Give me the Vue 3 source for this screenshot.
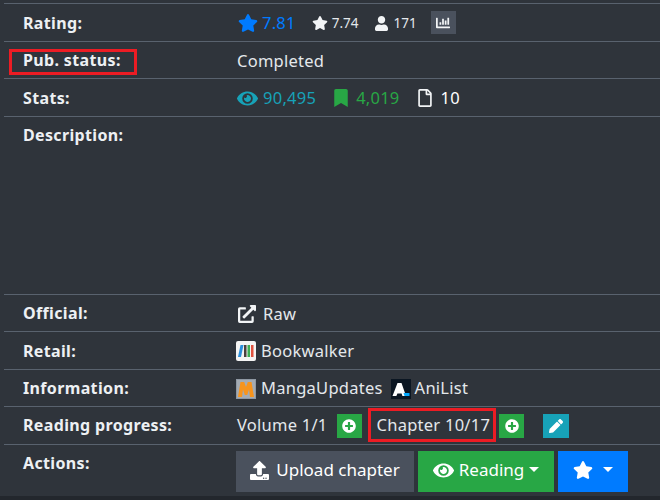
<script setup>
const star = 'M259.3 17.8L194 150.2 47.9 171.5c-26.2 3.8-36.7 36.1-17.7 54.6l105.7 103-25 145.5c-4.5 26.3 23.2 46 46.4 33.7L288 439.6l130.7 68.7c23.2 12.2 50.9-7.4 46.4-33.7l-25-145.5 105.7-103c19-18.5 8.5-50.8-17.7-54.6L382 150.2 316.7 17.8c-11.7-23.6-45.6-23.9-57.4 0z'
const eye = 'M572.52 241.4C518.29 135.59 410.93 64 288 64S57.68 135.64 3.48 241.41a32.35 32.35 0 0 0 0 29.19C57.71 376.41 165.07 448 288 448s230.32-71.64 284.52-177.41a32.35 32.35 0 0 0 0-29.19zM288 400a144 144 0 1 1 144-144 143.93 143.93 0 0 1-144 144zm0-240a95.31 95.31 0 0 0-25.31 3.79 47.85 47.85 0 0 1-66.9 66.9A95.78 95.78 0 1 0 288 160z'
const plus = 'M256 8C119 8 8 119 8 256s111 248 248 248 248-111 248-248S393 8 256 8zm144 276c0 6.6-5.4 12-12 12h-92v92c0 6.6-5.4 12-12 12h-56c-6.6 0-12-5.4-12-12v-92h-92c-6.6 0-12-5.4-12-12v-56c0-6.6 5.4-12 12-12h92v-92c0-6.6 5.4-12 12-12h56c6.6 0 12 5.4 12 12v92h92c6.6 0 12 5.4 12 12v56z'
</script>

<template>
  <div class="page">
    <div class="row">
      <div class="label">Rating:</div>
      <div class="value">
        <svg class="ic-star-lg blue" viewBox="0 0 576 512"><path :d="star" /></svg>
        <span class="blue rate">7.81</span>
        <svg class="ic-star-sm" viewBox="0 0 576 512"><path :d="star" /></svg>
        <span class="small s74">7.74</span>
        <svg class="ic-user" viewBox="0 0 448 512"><path d="M224 256c70.7 0 128-57.3 128-128S294.7 0 224 0 96 57.3 96 128s57.3 128 128 128zm89.6 32h-16.7c-22.2 10.2-46.9 16-72.9 16s-50.6-5.8-72.9-16h-16.7C60.2 288 0 348.2 0 422.4V464c0 26.5 21.5 48 48 48h352c26.5 0 48-21.5 48-48v-41.6c0-74.2-60.2-134.4-134.4-134.4z" /></svg>
        <span class="small">171</span>
        <span class="chart-btn">
          <svg viewBox="0 0 512 512"><path d="M332.8 320h38.4c6.4 0 12.8-6.4 12.8-12.8V172.8c0-6.4-6.4-12.8-12.8-12.8h-38.4c-6.4 0-12.8 6.4-12.8 12.8v134.4c0 6.4 6.4 12.8 12.8 12.8zm96 0h38.4c6.4 0 12.8-6.4 12.8-12.8V76.8c0-6.4-6.4-12.8-12.8-12.8h-38.4c-6.4 0-12.8 6.4-12.8 12.8v230.4c0 6.4 6.4 12.8 12.8 12.8zm-288 0h38.4c6.4 0 12.8-6.4 12.8-12.8v-70.4c0-6.4-6.4-12.8-12.8-12.8h-38.4c-6.4 0-12.8 6.4-12.8 12.8v70.4c0 6.4 6.4 12.8 12.8 12.8zm96 0h38.4c6.4 0 12.8-6.4 12.8-12.8V108.8c0-6.4-6.4-12.8-12.8-12.8h-38.4c-6.4 0-12.8 6.4-12.8 12.8v198.4c0 6.4 6.4 12.8 12.8 12.8zM496 384H64V80c0-8.84-7.16-16-16-16H16C7.16 64 0 71.16 0 80v336c0 17.67 14.33 32 32 32h464c8.84 0 16-7.16 16-16v-32c0-8.84-7.16-16-16-16z" /></svg>
        </span>
      </div>
    </div>

    <div class="row">
      <div class="label">Pub. status:</div>
      <div class="value">Completed</div>
      <div class="mark mark-status"></div>
    </div>

    <div class="row">
      <div class="label">Stats:</div>
      <div class="value">
        <svg class="ic-eye teal" viewBox="0 0 576 512"><path :d="eye" /></svg>
        <span class="teal views">90,495</span>
        <svg class="ic-bookmark green" viewBox="0 0 384 512"><path d="M0 512V48C0 21.49 21.49 0 48 0h288c26.51 0 48 21.49 48 48v464L192 400 0 512z" /></svg>
        <span class="green follows">4,019</span>
        <svg class="ic-file" viewBox="0 0 384 512"><path d="M369.9 97.9L286 14C277 5 264.8-.1 252.1-.1H48C21.5 0 0 21.5 0 48v416c0 26.5 21.5 48 48 48h288c26.5 0 48-21.5 48-48V131.9c0-12.7-5.1-25-14.1-34zM332.1 128H256V51.9l76.1 76.1zM48 464V48h160v104c0 13.3 10.7 24 24 24h104v288H48z" /></svg>
        <span class="white">10</span>
      </div>
    </div>

    <div class="row row-desc">
      <div class="label">Description:</div>
    </div>

    <div class="row">
      <div class="label">Official:</div>
      <div class="value">
        <svg class="ic-ext" viewBox="0 0 512 512"><path d="M432,320H400a16,16,0,0,0-16,16V448H64V128H208a16,16,0,0,0,16-16V80a16,16,0,0,0-16-16H48A48,48,0,0,0,0,112V464a48,48,0,0,0,48,48H400a48,48,0,0,0,48-48V336A16,16,0,0,0,432,320ZM488,0h-128c-21.37,0-32.05,25.91-17,41l35.73,35.73L135,320.37a24,24,0,0,0,0,34L157.67,377a24,24,0,0,0,34,0L435.28,133.32,471,169c15,15,41,4.5,41-17V24A24,24,0,0,0,488,0Z" /></svg>
        <span>Raw</span>
      </div>
    </div>

    <div class="row">
      <div class="label">Retail:</div>
      <div class="value">
        <svg class="logo" viewBox="0 0 20 20">
          <rect width="20" height="20" rx="2" fill="#f4f4f4" />
          <path d="M2 16 L4.5 4 H7.5 L5 16 Z" fill="#2a8fdc" />
          <rect x="8" y="4" width="2.5" height="12" fill="#4a3f3f" />
          <rect x="11.5" y="4" width="2.5" height="12" fill="#3cae54" />
          <rect x="15" y="4" width="2.5" height="12" fill="#e0523f" />
        </svg>
        <span>Bookwalker</span>
      </div>
    </div>

    <div class="row">
      <div class="label">Information:</div>
      <div class="value">
        <svg class="logo" viewBox="0 0 20 20">
          <rect width="20" height="20" fill="#8f98a3" />
          <rect x="1" y="1" width="18" height="18" fill="#a4abb3" />
          <path d="M2 18 L4.5 3 H8.2 L10 8 L11.8 3 H15.5 L18 18 H14 L13 10.5 L11.2 16 H8.8 L7 10.5 L6 18 Z" fill="#f7941d" />
        </svg>
        <span class="up">MangaUpdates</span>
        <svg class="logo logo-ani" viewBox="0 0 20 20">
          <rect width="20" height="20" fill="#0b1622" />
          <path d="M1.5 17 L6.5 4 H10.5 L15 17 H11.4 L10.6 14.4 H6.4 L5.4 17 Z" fill="#fff" />
          <path d="M12.5 14 H18.5 V17 H13.5 Z" fill="#02a9ff" />
        </svg>
        <span class="up">AniList</span>
      </div>
    </div>

    <div class="row">
      <div class="label label-progress">Reading progress:</div>
      <div class="value">
        <span class="volume up">Volume 1/1</span>
        <span class="mini green-bg"><svg viewBox="0 0 512 512"><path :d="plus" /></svg></span>
        <span class="chapter up">Chapter 10/17</span>
        <span class="mini green-bg"><svg viewBox="0 0 512 512"><path :d="plus" /></svg></span>
        <span class="mini teal-bg edit"><svg viewBox="0 0 512 512"><path d="M497.9 142.1l-46.1 46.1c-4.7 4.7-12.3 4.7-17 0l-111-111c-4.7-4.7-4.7-12.3 0-17l46.1-46.1c18.7-18.7 49.1-18.7 67.9 0l60.1 60.1c18.8 18.7 18.8 49.1 0 67.9zM284.2 99.8L21.6 362.4.4 483.9c-2.9 16.4 11.4 30.6 27.8 27.8l121.5-21.3 262.6-262.6c4.7-4.7 4.7-12.3 0-17l-111-111c-4.8-4.7-12.4-4.7-17.1 0z" /></svg></span>
      </div>
      <div class="mark mark-chapter"></div>
    </div>

    <div class="row row-actions">
      <div class="label label-actions">Actions:</div>
      <div class="buttons">
        <span class="btn btn-upload">
          <svg class="ic-upload" viewBox="0 0 512 512"><path d="M296 384h-80c-13.3 0-24-10.7-24-24V192h-87.7c-17.8 0-26.7-21.5-14.1-34.1L242.3 5.7c7.5-7.5 19.8-7.5 27.3 0l152.2 152.2c12.6 12.6 3.7 34.1-14.1 34.1H320v168c0 13.3-10.7 24-24 24zm216-8v112c0 13.3-10.7 24-24 24H24c-13.3 0-24-10.7-24-24V376c0-13.3 10.7-24 24-24h136v8c0 30.9 25.1 56 56 56h80c30.9 0 56-25.1 56-56v-8h136c13.3 0 24 10.7 24 24zm-124 88c0-11-9-20-20-20s-20 9-20 20 9 20 20 20 20-9 20-20zm64 0c0-11-9-20-20-20s-20 9-20 20 9 20 20 20 20-9 20-20z" /></svg>
          Upload chapter
        </span>
        <span class="btn btn-reading">
          <svg class="ic-eye-btn" viewBox="0 0 576 512"><path :d="eye" /></svg>
          Reading
          <i class="caret"></i>
        </span>
        <span class="btn btn-star">
          <svg class="ic-star-btn" viewBox="0 0 576 512"><path :d="star" /></svg>
          <i class="caret"></i>
        </span>
      </div>
    </div>
    <div class="footer"></div>
  </div>
</template>

<style>
html, body { margin: 0; background: #2f343b; }
</style>

<style scoped>
.page {
  width: 660px;
  height: 500px;
  overflow: hidden;
  box-sizing: border-box;
  padding: 3px 0 0 4px;
  background: #2f343b;
  color: #e4e8ec;
  font-family: "Noto Sans", sans-serif;
  font-size: 16.5px;
  letter-spacing: 0.25px;
  line-height: 24px;
}
.row {
  position: relative;
  display: flex;
  box-sizing: border-box;
  height: 37.5px;
  align-items: flex-start;
  padding-top: 7px;
  border-top: 1px solid #59626e;
}
.row-desc { height: 178px; }
.row-actions { height: 52px; padding-top: 6px; }
.label {
  width: 233px;
  flex: none;
  box-sizing: border-box;
  padding-left: 19px;
  font-size: 16px;
  letter-spacing: 0.35px;
  font-weight: 700;
  color: #edf0f3;
  margin-top: -0.5px;
}
.label-progress { margin-top: -1px; }
.label-actions { margin-top: 0; }
.value {
  display: flex;
  align-items: center;
  height: 24px;
  white-space: nowrap;
}
.up { margin-top: -2px; }
svg { fill: currentColor; display: block; flex: none; }
.blue { color: #007bff; }
.teal { color: #17a2b8; }
.green { color: #28a745; }
.white { color: #fff; }
.ic-star-lg { width: 20px; height: 18px; margin-left: 1px; }
.rate { margin-left: 4px; }
.ic-star-sm { width: 16px; height: 14px; margin-left: 16px; color: #f2f4f6; }
.small { font-size: 13.5px; letter-spacing: 0; margin-left: 4px; }
.ic-user { width: 13px; height: 15px; margin-left: 16px; color: #f2f4f6; }
.ic-user + .small { margin-left: 6px; }
.chart-btn {
  display: flex;
  align-items: center;
  justify-content: center;
  width: 25px;
  height: 23px;
  margin-left: 14px;
  margin-top: -1px;
  background: #4a515d;
}
.chart-btn svg { width: 14px; height: 14px; color: #f2f4f6; }
.ic-eye { width: 21px; height: 19px; }
.views { margin-left: 5px; }
.ic-bookmark { width: 14px; height: 18px; margin-left: 18px; }
.follows { margin-left: 8px; }
.ic-file { width: 14px; height: 18px; margin-left: 18px; color: #f2f4f6; }
.value .white { margin-left: 9px; }
.ic-ext { width: 18px; height: 18px; margin: 0 7px 0 1px; color: #f2f4f6; }
.logo { width: 20px; height: 20px; margin-right: 5px; margin-left: -1px; }
.logo-ani { margin-left: 8px; margin-right: 4px; }
.mini {
  display: flex;
  align-items: center;
  justify-content: center;
  width: 25px;
  height: 24px;
  margin-left: 9px;
  color: #fff;
}
.mini svg { width: 14px; height: 14px; }
.green-bg { background: #28a745; }
.teal-bg { background: #17a2b8; }
.edit { width: 26px; margin-left: 19px; }
.chapter { margin-left: 15px; }
.mark {
  position: absolute;
  box-sizing: border-box;
  border: 3px solid #ec1c24;
}
.mark-status { left: 5px; top: 7px; width: 128px; height: 26px; }
.mark-chapter { left: 364px; top: 1px; width: 128px; height: 34px; }
.buttons { display: flex; gap: 4px; height: 41px; margin-left: -1px; }
.btn {
  display: flex;
  align-items: center;
  justify-content: center;
  box-sizing: border-box;
  height: 41px;
  padding-bottom: 2px;
  color: #fff;
  font-size: 17px;
  letter-spacing: 0;
  white-space: nowrap;
}
.btn-upload { width: 178px; background: #4a515d; gap: 7px; }
.btn-reading { width: 136px; background: #28a745; gap: 5px; }
.btn-star { width: 70px; background: #007bff; gap: 10px; }
.ic-upload { width: 19px; height: 19px; }
.ic-eye-btn { width: 21px; height: 19px; }
.ic-star-btn { width: 20px; height: 18px; }
.caret {
  display: block;
  width: 0;
  height: 0;
  margin-top: -2px;
  border-top: 5px solid #fff;
  border-left: 5px solid transparent;
  border-right: 5px solid transparent;
}
.footer { height: 4px; background: #23272d; margin-left: -4px; }
</style>
